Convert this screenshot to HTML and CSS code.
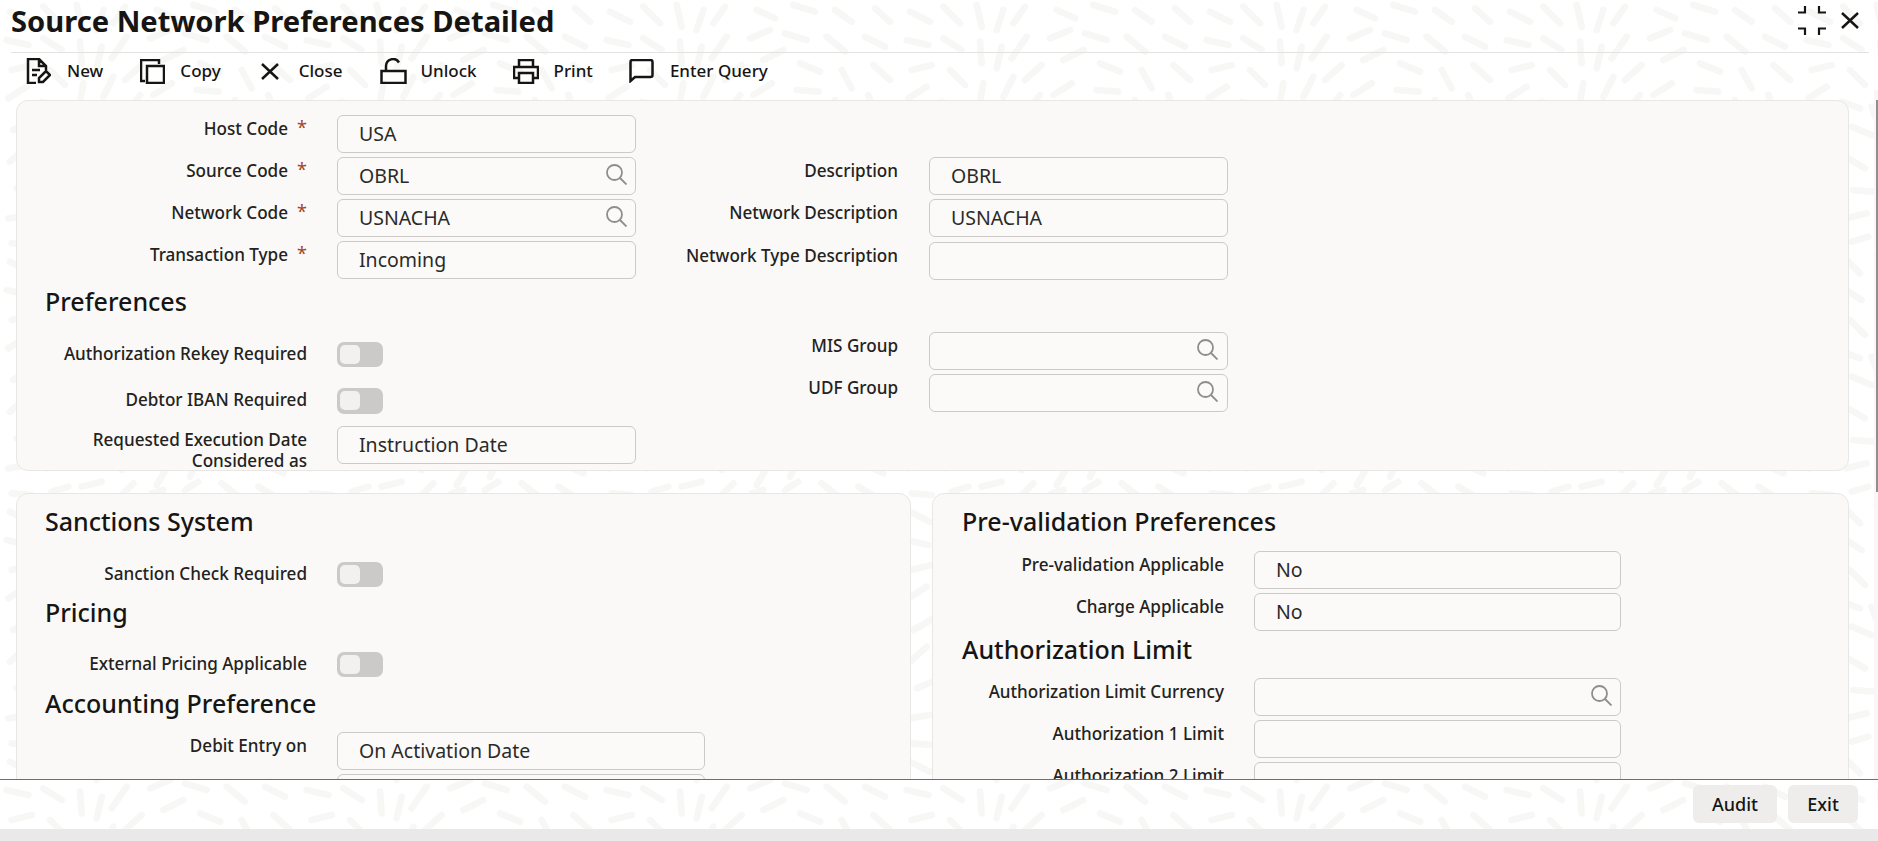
FILE: index.html
```html
<!DOCTYPE html>
<html lang="en">
<head>
<meta charset="utf-8">
<title>Source Network Preferences Detailed</title>
<link rel="stylesheet" href="styles.css">
</head>
<body>
<div class="page">
  <header class="titlebar">
    <h1 class="title">Source Network Preferences Detailed</h1>
    <div class="window-actions">
      <svg class="ico-shrink" viewBox="0 0 28 29" width="28" height="29"><path d="M7 0v6.500H0M21 0v6.500h7M7 29v-6.500H0M21 29v-6.500h7"/></svg>
      <svg class="ico-x" viewBox="0 0 18 17" width="18" height="17"><path d="M1 1l16 15M17 1L1 16"/></svg>
    </div>
  </header>
  <nav class="toolbar">
    <a class="tool tool-new">
      <svg class="tool-ico" viewBox="0 0 25 26" width="25" height="26"><path d="M10 25H2V1h11l7 7v5M13 1v7h7M6 12h8M6 17h5M13 24v-4l7-7 4 4-7 7z"/></svg>
      <span>New</span>
    </a>
    <a class="tool tool-copy">
      <svg class="tool-ico" viewBox="0 0 25 25" width="25" height="25"><path d="M5 22H1V1h18v4M7 7h17v17H7z"/></svg>
      <span>Copy</span>
    </a>
    <a class="tool tool-close">
      <svg class="tool-ico" viewBox="0 0 18 17" width="18" height="17"><path d="M1 1l16 15M17 1L1 16"/></svg>
      <span>Close</span>
    </a>
    <a class="tool tool-unlock">
      <svg class="tool-ico" viewBox="0 0 27 26" width="27" height="26"><path d="M1.500 13h24v12h-24zM6 13V8a7 7 0 0 1 13-3.500"/></svg>
      <span>Unlock</span>
    </a>
    <a class="tool tool-print">
      <svg class="tool-ico" viewBox="0 0 26 25" width="26" height="25"><path d="M6 8V1h14v7M6 19H1V8h24v11h-5M6 14h14v10H6z"/></svg>
      <span>Print</span>
    </a>
    <a class="tool tool-query">
      <svg class="tool-ico" viewBox="0 0 25 24" width="25" height="24"><path d="M1.500 22V3q0-2 2-2h18q2 0 2 2v13q0 2-2 2H6z"/></svg>
      <span>Enter Query</span>
    </a>
  </nav>
  <main class="content">
    <section class="panel panel-top">
      <div class="col col-a">
        <div class="field"><label class="lbl">Host Code<i class="req">*</i></label><div class="inp">USA</div></div>
        <div class="field"><label class="lbl">Source Code<i class="req">*</i></label><div class="inp">OBRL<svg class="search" viewBox="0 0 21 21" width="21" height="21"><circle cx="8.500" cy="8.500" r="7.500"/><path d="M14 14l6.500 6.500"/></svg></div></div>
        <div class="field"><label class="lbl">Network Code<i class="req">*</i></label><div class="inp">USNACHA<svg class="search" viewBox="0 0 21 21" width="21" height="21"><circle cx="8.500" cy="8.500" r="7.500"/><path d="M14 14l6.500 6.500"/></svg></div></div>
        <div class="field"><label class="lbl">Transaction Type<i class="req">*</i></label><div class="inp">Incoming</div></div>
        <h2 class="head head-pref">Preferences</h2>
        <div class="field field-toggle"><label class="lbl">Authorization Rekey Required</label><div class="toggle"><b></b></div></div>
        <div class="field field-toggle field-tight"><label class="lbl">Debtor IBAN Required</label><div class="toggle"><b></b></div></div>
        <div class="field"><label class="lbl lbl-two">Requested Execution Date Considered as</label><div class="inp">Instruction Date</div></div>
      </div>
      <div class="col col-b">
        <div class="field"><label class="lbl">Description</label><div class="inp">OBRL</div></div>
        <div class="field"><label class="lbl">Network Description</label><div class="inp">USNACHA</div></div>
        <div class="field field-nudge"><label class="lbl">Network Type Description</label><div class="inp"></div></div>
        <div class="field field-gap"><label class="lbl">MIS Group</label><div class="inp"><svg class="search" viewBox="0 0 21 21" width="21" height="21"><circle cx="8.500" cy="8.500" r="7.500"/><path d="M14 14l6.500 6.500"/></svg></div></div>
        <div class="field"><label class="lbl">UDF Group</label><div class="inp"><svg class="search" viewBox="0 0 21 21" width="21" height="21"><circle cx="8.500" cy="8.500" r="7.500"/><path d="M14 14l6.500 6.500"/></svg></div></div>
      </div>
    </section>
    <div class="lower">
      <section class="panel panel-left">
        <h2 class="head head-san">Sanctions System</h2>
        <div class="field field-toggle"><label class="lbl">Sanction Check Required</label><div class="toggle"><b></b></div></div>
        <h2 class="head head-pri">Pricing</h2>
        <div class="field field-toggle"><label class="lbl">External Pricing Applicable</label><div class="toggle"><b></b></div></div>
        <h2 class="head head-acc">Accounting Preference</h2>
        <div class="field field-wide"><label class="lbl">Debit Entry on</label><div class="inp">On Activation Date</div></div>
        <div class="field field-wide"><label class="lbl"></label><div class="inp"></div></div>
      </section>
      <section class="panel panel-right">
        <h2 class="head head-pre">Pre-validation Preferences</h2>
        <div class="field"><label class="lbl">Pre-validation Applicable</label><div class="inp">No</div></div>
        <div class="field"><label class="lbl">Charge Applicable</label><div class="inp">No</div></div>
        <h2 class="head head-auth">Authorization Limit</h2>
        <div class="field"><label class="lbl">Authorization Limit Currency</label><div class="inp"><svg class="search" viewBox="0 0 21 21" width="21" height="21"><circle cx="8.500" cy="8.500" r="7.500"/><path d="M14 14l6.500 6.500"/></svg></div></div>
        <div class="field"><label class="lbl">Authorization 1 Limit</label><div class="inp"></div></div>
        <div class="field"><label class="lbl">Authorization 2 Limit</label><div class="inp"></div></div>
      </section>
    </div>
  </main>
  <div class="scrollbar"><div class="thumb"></div></div>
  <footer class="footer">
    <button class="btn btn-audit">Audit</button>
    <button class="btn btn-exit">Exit</button>
  </footer>
  <div class="strip"></div>
</div>
</body>
</html>
```
FILE: styles.css
```css
* { box-sizing: border-box; }
html, body { margin: 0; padding: 0; height: 100%; overflow: hidden; }
body {
  font-family: "Noto Sans", "Open Sans", sans-serif;
  color: #161513;
  background-color: #fff;
  background-size: 300px 250px;
  background-image: url("data:image/svg+xml,%3Csvg xmlns='http://www.w3.org/2000/svg' viewBox='0 0 360 300' width='360' height='300'%3E%3Cg fill='none' stroke='%23f7f7f6' stroke-width='8' stroke-linecap='round'%3E%3Cpath d='M12 14l24 12M52 8l20 20M92 6l6 26M124 12l-8 24M150 8l-14 20M188 12l22 10M232 6l26 8M282 12l20 14M330 10l18 16'/%3E%3Cpath d='M8 48l26 6M52 46l22 14M96 50l2 26M122 56l-6 26M152 44l-18 26M180 46l24-10M222 40l26 8M272 44l22 18M318 44l24 12'/%3E%3Cpath d='M14 84l24-6M60 84l18 18M100 100l-4 22M136 92l-12 24M170 78l-20 18M196 72l24-12M240 76l24 10M290 84l12 22M328 78l20 18'/%3E%3Cpath d='M10 118l22-14M50 122l22 8M92 144l-6-16M132 132l-8 26M168 114l-18 22M206 100l-22 14M236 108l26 2M282 120l8 24M322 114l10 26'/%3E%3Cpath d='M16 156l24-14M62 152l24 10M108 166l-2 24M146 170l-10 22M178 146l-12 26M220 138l-22 16M250 142l24 6M302 156l6 26M344 148l4 24'/%3E%3Cpath d='M12 194l20-18M54 188l24 14M94 210l14 14M132 206l2 24M170 194l-8 26M208 176l-16 20M244 174l24 10M284 192l18 12M326 188l14 20'/%3E%3Cpath d='M20 226l24-10M64 228l24 2M104 250l22 4M150 240l-4 24M188 222l-10 24M228 208l-14 24M262 212l22 10M306 224l20 8M346 218l8 24'/%3E%3Cpath d='M10 262l26-4M56 262l24-6M98 284l24-6M160 280l-14 14M200 262l-12 20M240 248l-12 24M276 248l22 10M318 258l22 10'/%3E%3Cpath d='M14 292l24 2M62 290l20-6M182 292l14-4M222 288l16-10M266 280l18 14M310 284l20 12'/%3E%3C/g%3E%3C/svg%3E");
}
.page {
  position: relative;
  display: flex;
  flex-direction: column;
  width: 1878px;
  height: 841px;
  overflow: hidden;
}

/* title */
.titlebar {
  flex: none;
  display: flex;
  align-items: flex-start;
  justify-content: space-between;
  height: 53px;
  margin: 0 9px 0 11px;
  border-bottom: 1px solid #e4e3e1;
}
.title {
  margin: 0;
  font-size: 29.15px;
  line-height: 43px;
  font-weight: 700;
}
.window-actions { display: flex; align-items: flex-start; gap: 15px; padding: 6px 10px 0 0; }
.ico-shrink path { fill: none; stroke: #161513; stroke-width: 2.2; }
.ico-x { margin-top: 6px; }
.ico-x path { fill: none; stroke: #161513; stroke-width: 2.5; }

/* toolbar */
.toolbar {
  flex: none;
  display: flex;
  align-items: center;
  height: 47px;
  padding: 0 0 11px 26px;
  font-size: 17px;
  font-weight: 500;
}
.tool { display: flex; align-items: center; gap: 16px; }
.tool span { padding-bottom: 2px; }
.tool-ico { flex: none; fill: none; stroke: #161513; stroke-width: 2.5; }
.tool-copy { margin-left: 37px; gap: 15px; }
.tool-close { margin-left: 40px; gap: 20px; }
.tool-unlock { margin-left: 37px; gap: 14px; }
.tool-print { margin-left: 36px; gap: 15px; }
.tool-query { margin-left: 36px; }

/* panels */
.content { flex: 1; min-height: 0; overflow: hidden; padding: 0 29px 0 16px; }
.panel {
  background: #faf9f7;
  border: 1px solid #e9e7e4;
  border-radius: 12px;
}
.panel-top { display: flex; height: 371px; padding-top: 14px; }
.col-a { width: 619px; }
.col-b { width: 600px; padding-top: 42px; --lab: 262px; --lab-gap: 31px; }
.lower { display: flex; gap: 21px; margin-top: 22px; height: 400px; }
.panel-left { width: 895px; padding-top: 11px; }
.panel-right { flex: 1; padding-top: 11px; --lab: 291px; }

/* fields */
.field { display: flex; height: 38px; margin-bottom: 4px; }
.lbl {
  flex: none;
  width: var(--lab, 290px);
  margin-right: var(--lab-gap, 30px);
  padding-top: 3px;
  font-size: 17.1px;
  line-height: 21px;
  font-weight: 500;
  color: #232220;
  text-align: right;
}
.req {
  display: inline-block;
  width: 19px;
  color: #a8431b;
  font-style: normal;
  font-weight: 400;
  font-size: 18px;
  line-height: 19px;
  text-align: right;
  vertical-align: top;
}
.inp {
  position: relative;
  flex: none;
  width: 299px;
  height: 38px;
  padding-left: 21px;
  font-size: 19.5px;
  line-height: 36px;
  color: #2b2a28;
  background: #fbfaf9;
  border: 1px solid #cbcac7;
  border-radius: 6px;
}
.panel-right .inp { width: 367px; }
.field-wide .inp { width: 368px; }
.search {
  position: absolute;
  top: 6px;
  right: 8px;
  fill: none;
  stroke: #8e8d8b;
  stroke-width: 1.800;
}
.col-b .search { right: 9px; }

/* toggles */
.field-toggle { height: 25px; margin-bottom: 21px; }
.field-toggle .lbl { padding-top: 1px; }
.field-tight { margin-bottom: 13px; }
.field-tight .toggle { height: 26px; }
.toggle {
  width: 46px;
  height: 25px;
  padding: 3px;
  background: #cbcac8;
  border-radius: 7px;
}
.toggle b {
  display: block;
  width: 20px;
  height: 19px;
  background: #f2f1ef;
  border-radius: 5px;
}
.lbl-two { padding-left: 40px; }
.field-nudge { margin-top: 5px; margin-bottom: 0; }
.field-gap { margin-top: 52px; }

/* headings */
.head {
  height: 36px;
  margin: 0;
  padding-left: 28px;
  font-size: 25px;
  line-height: 36px;
  font-weight: 500;
  color: #161513;
}
.lower .head { line-height: 32px; }
.head-pref { margin-bottom: 23px; }
.head-san { margin-bottom: 21px; }
.panel-left .field-toggle { margin-bottom: 10px; }
.head-pri { margin-top: -1px; margin-bottom: 20px; }
.head-acc { margin-bottom: 9px; }
.head-pre { margin-bottom: 10px; padding-left: 29px; }
.head-auth { margin: -2px 0 9px; padding-left: 29px; }

/* footer */
.scrollbar {
  position: absolute;
  top: 90px;
  right: 0;
  width: 4px;
  height: 689px;
  background: #f7f7f7;
}
.thumb {
  position: absolute;
  top: 10px;
  right: 0;
  width: 2px;
  height: 392px;
  background: #8f8f8f;
}
.footer {
  position: relative;
  flex: none;
  display: flex;
  justify-content: flex-end;
  gap: 11px;
  height: 50px;
  padding: 5px 20px 0 0;
  border-top: 1px solid #6f6e6c;
}
.btn {
  height: 38px;
  padding: 0;
  font-family: inherit;
  font-size: 18px;
  font-weight: 500;
  color: #161513;
  background: #eeedeb;
  border: 0;
  border-radius: 6px;
}
.btn-audit { width: 84px; }
.btn-exit { width: 70px; }
.strip { flex: none; height: 12px; background: #e9e9e9; }
```
